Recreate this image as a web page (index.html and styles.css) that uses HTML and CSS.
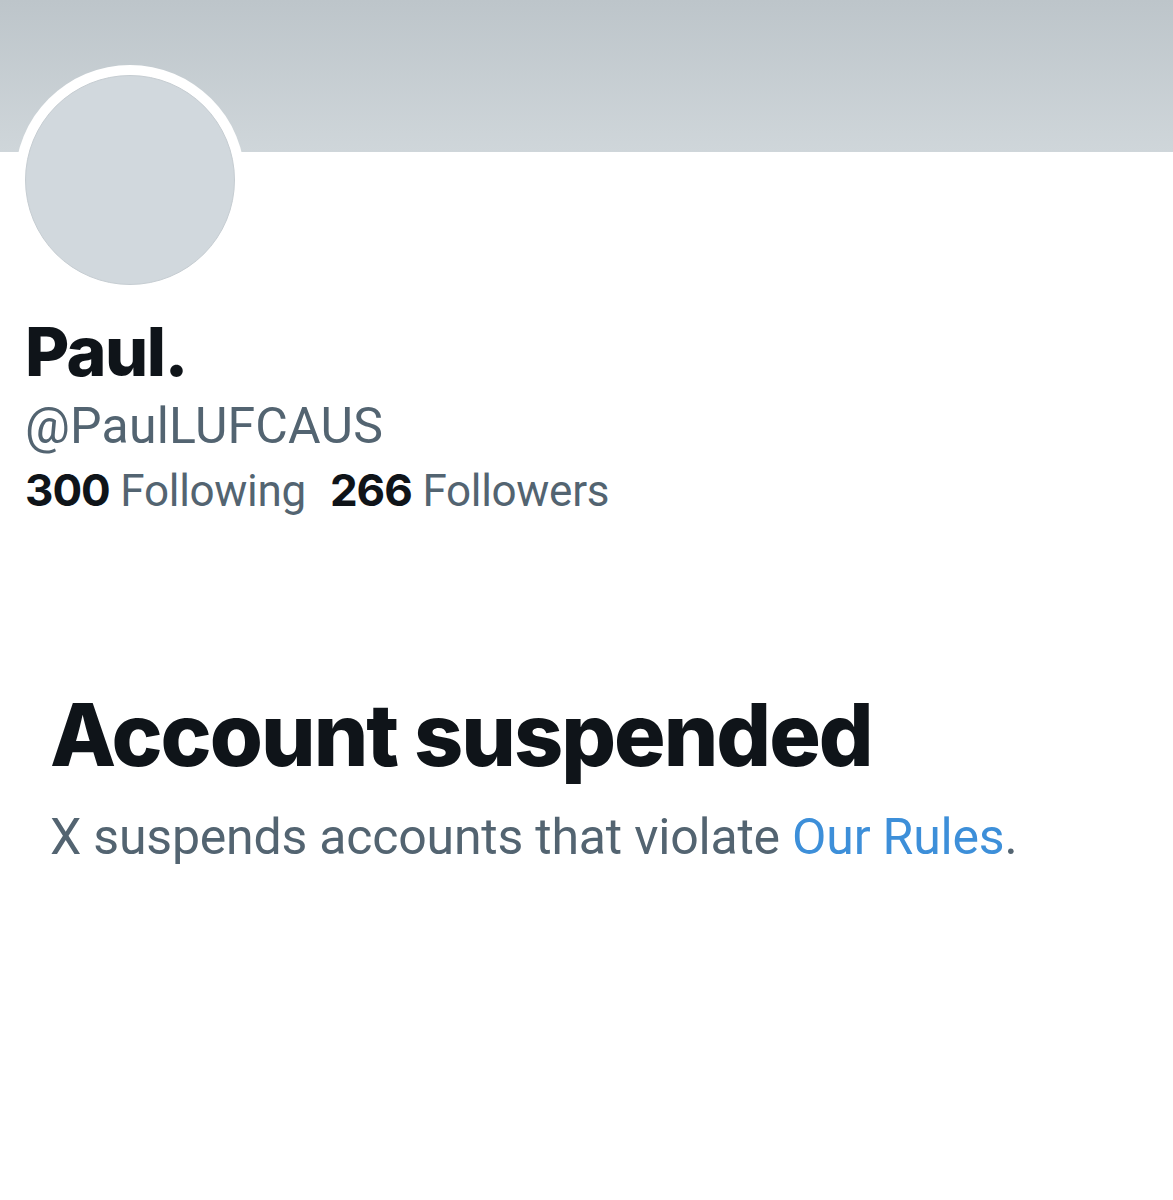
FILE: index.html
```html
<!DOCTYPE html>
<html>
<head>
<meta charset="utf-8">
<link rel="stylesheet" href="styles.css">
</head>
<body>
<div class="page">
  <div class="banner"></div>
  <div class="avatar-wrap">
    <div class="avatar-ring"><div class="avatar"></div></div>
  </div>
  <div class="profile">
    <div class="name">Paul.</div>
    <div class="handle">@PaulLUFCAUS</div>
    <div class="stats">
      <span class="stat"><b>300</b> Following</span>
      <span class="stat"><b>266</b> Followers</span>
    </div>
  </div>
  <div class="suspended">
    <h1 class="title">Account suspended</h1>
    <p class="desc">X suspends accounts that violate <a class="link" href="#">Our Rules</a>.</p>
  </div>
</div>
</body>
</html>
```
FILE: styles.css
```css
html, body {
  margin: 0;
  padding: 0;
  background: #ffffff;
}
.page {
  width: 1173px;
  min-height: 1200px;
  font-family: "Roboto", "Liberation Sans", sans-serif;
  color: #0f1419;
}
.banner {
  height: 152px;
  background: linear-gradient(to bottom, #bdc5ca, #cfd6da);
}
.avatar-wrap {
  padding-left: 15px;
  margin-top: -87px;
}
.avatar-ring {
  width: 230px;
  height: 230px;
  border-radius: 50%;
  background: #ffffff;
  display: flex;
  align-items: center;
  justify-content: center;
}
.avatar {
  width: 208px;
  height: 208px;
  border-radius: 50%;
  background: #d1d8dd;
  border: 1px solid #c6cdd2;
}
.profile {
  padding-left: 25px;
}
.name {
  font-family: "Inter", "Liberation Sans", sans-serif;
  font-weight: 800;
  font-size: 68px;
  line-height: 80px;
  margin-top: 16px;
  letter-spacing: -1.5px;
}
.handle {
  font-size: 50px;
  line-height: 60px;
  color: #536471;
  margin-top: 5px;
  letter-spacing: 0.2px;
}
.stats {
  font-size: 44px;
  line-height: 64px;
  color: #536471;
  display: flex;
  gap: 24px;
  margin-top: 2px;
  letter-spacing: -0.3px;
}
.stat b {
  font-family: "Inter", "Liberation Sans", sans-serif;
  font-weight: 700;
  color: #0f1419;
  letter-spacing: -1px;
}
.suspended {
  padding-left: 50px;
  margin-top: 162px;
}
.title {
  font-family: "Inter", "Liberation Sans", sans-serif;
  font-weight: 800;
  font-size: 86px;
  line-height: 100px;
  margin: 0;
  letter-spacing: -2px;
}
.desc {
  font-size: 50px;
  line-height: 60px;
  color: #536471;
  margin: 22px 0 0;
  letter-spacing: -0.2px;
}
.link {
  color: #3d8fd9;
  text-decoration: none;
}
```
